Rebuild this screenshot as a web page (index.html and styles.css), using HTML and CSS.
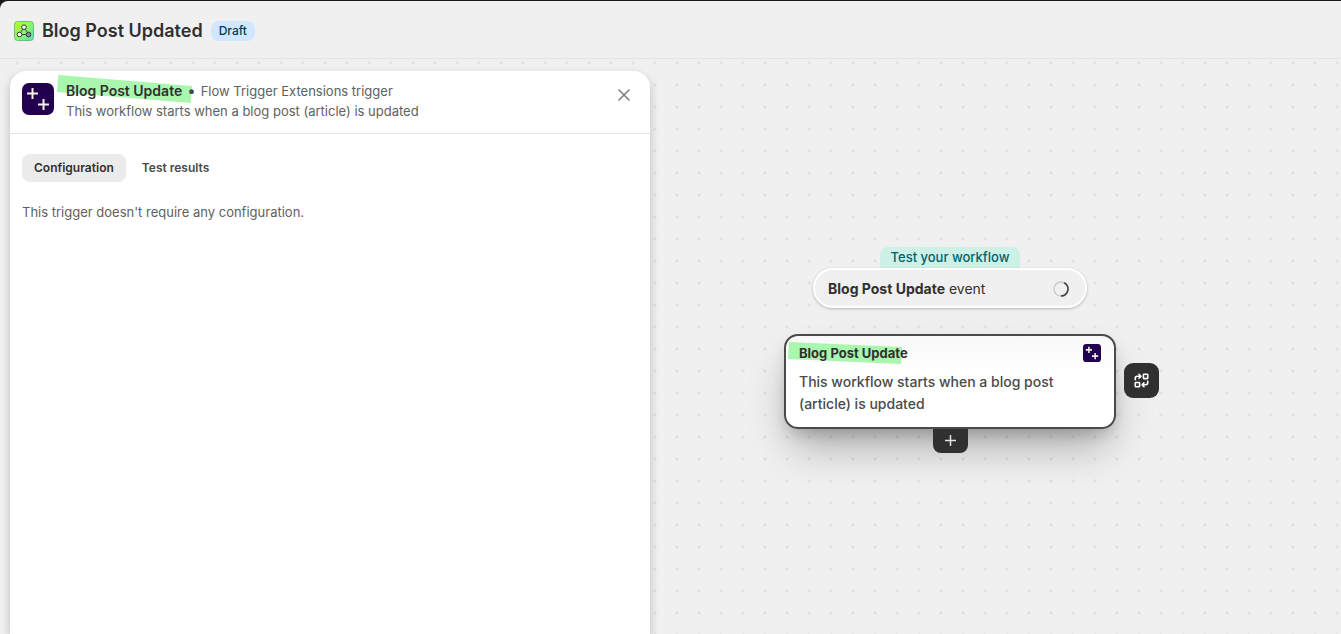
FILE: index.html
```html
<!DOCTYPE html>
<html lang="en">
<head>
    <meta charset="UTF-8">
    <meta name="viewport" content="width=device-width, initial-scale=1.0">
    <title>Blog Post Updated</title>
    <link rel="stylesheet" href="styles.css">
</head>
<body>
    <div class="frame">
        <header class="top-bar">
            <svg class="flow-logo" viewBox="0 0 20 20" aria-hidden="true">
                <defs>
                    <linearGradient id="flow-bg" x1="0" y1="0" x2="1" y2="1">
                        <stop offset="0" stop-color="#b6ff1c"/>
                        <stop offset="0.5" stop-color="#8df768"/>
                        <stop offset="1" stop-color="#56dcc8"/>
                    </linearGradient>
                </defs>
                <rect x="0.5" y="0.5" width="19" height="19" rx="3" fill="url(#flow-bg)" stroke="#58b46c" stroke-opacity="0.8"/>
                <path d="M9 8 6.500 11.500M11 8l2.500 3.500M8 13.500h4" fill="none" stroke="#3a4a3c" stroke-width="1"/>
                <circle cx="10" cy="6.200" r="2.300" fill="#fff" stroke="#333" stroke-width="1"/>
                <circle cx="5.500" cy="13.500" r="2.300" fill="#fff" stroke="#333" stroke-width="1"/>
                <circle cx="14.500" cy="13.500" r="2.300" fill="#909090" stroke="#333" stroke-width="1"/>
            </svg>
            <h1>Blog Post Updated</h1>
            <span class="badge">Draft</span>
        </header>
        <main class="canvas">
            <section class="panel">
                <div class="panel-head">
                    <svg class="app-icon" viewBox="0 0 32 32" aria-hidden="true">
                        <rect width="32" height="32" rx="7" fill="#22004f"/>
                        <path d="M10.500 5v11M5 10.500h11M21.500 16v11M16 21.500h11" stroke="#f3f0e6" stroke-width="2"/>
                    </svg>
                    <div class="panel-title">
                        <p><strong class="marked">Blog Post Update</strong><span class="bullet">•</span><span>Flow Trigger Extensions trigger</span></p>
                        <p>This workflow starts when a blog post (article) is updated</p>
                    </div>
                    <button class="close" type="button" aria-label="Close">
                        <svg viewBox="0 0 12 12"><path d="M1 1l10 10M11 1L1 11" fill="none" stroke="#7a7a7a" stroke-width="1.500" stroke-linecap="round"/></svg>
                    </button>
                </div>
                <div class="panel-body">
                    <div class="tabs">
                        <button class="tab active" type="button">Configuration</button>
                        <button class="tab" type="button">Test results</button>
                    </div>
                    <p>This trigger doesn't require any configuration.</p>
                </div>
            </section>
            <section class="flow">
                <span class="test-label">Test your workflow</span>
                <button class="test-event" type="button">
                    <span><b>Blog Post Update</b> event</span>
                    <svg class="spinner" viewBox="0 0 16 16" aria-hidden="true">
                        <circle cx="8" cy="8" r="7" fill="none" stroke="#c9c9c9" stroke-width="1.300"/>
                        <path d="M11 1.700A7 7 0 0 1 8 15" fill="none" stroke="#444" stroke-width="1.600"/>
                    </svg>
                </button>
                <article class="node">
                    <div class="node-head">
                        <h2 class="marked">Blog Post Update</h2>
                        <svg class="node-icon" viewBox="0 0 32 32" aria-hidden="true">
                            <rect width="32" height="32" rx="6" fill="#22004f"/>
                            <path d="M10.500 5v11M5 10.500h11M21.500 16v11M16 21.500h11" stroke="#f3f0e6" stroke-width="2.800"/>
                        </svg>
                    </div>
                    <p>This workflow starts when a blog post (article) is updated</p>
                    <button class="swap" type="button" aria-label="Replace trigger">
                        <svg viewBox="0 0 14 14" fill="none" stroke="#fff" stroke-width="1.500" stroke-linecap="round" stroke-linejoin="round">
                            <rect x="8.800" y="1.200" width="4" height="4" rx="0.500"/>
                            <rect x="1.200" y="8.800" width="4" height="4" rx="0.500"/>
                            <path d="M1.200 6.300V4.800Q1.200 3 3 3H6M4.700 1.200 6.500 3 4.700 4.800M12.800 7.700v1.500Q12.800 11 11 11H8M9.300 9.200 7.500 11l1.800 1.800"/>
                        </svg>
                    </button>
                </article>
                <button class="add" type="button" aria-label="Add step">
                    <svg viewBox="0 0 11 11"><path d="M5.500 0v11M0 5.500h11" stroke="#e3e3e3" stroke-width="1.500"/></svg>
                </button>
            </section>
        </main>
    </div>
</body>
</html>
```
FILE: styles.css
```css
*{
    margin: 0;
    padding: 0;
    box-sizing: border-box;
}
body{
    background: #1a1a1a;
    font-family: Inter, sans-serif;
    font-size: 13px;
    font-weight: 430;
    line-height: 20px;
    color: #616161;
}
button{
    border: none;
    font: inherit;
    cursor: pointer;
}
svg{
    display: block;
}
.frame{
    height: 100vh;
    display: flex;
    flex-direction: column;
    border-top: 1px solid #1a1a1a;
    overflow: hidden;
}
.top-bar{
    height: 58px;
    flex: none;
    display: flex;
    align-items: center;
    gap: 8px;
    padding: 2px 14px 0;
    background: #f0f0f0;
    border-bottom: 1px solid #e3e3e3;
    border-top-left-radius: 8px;
}
.flow-logo{
    width: 20px;
    height: 20px;
}
h1{
    font-size: 18px;
    font-weight: 600;
    line-height: 24px;
    color: #303030;
}
.badge{
    padding: 0 8px;
    border-radius: 8px;
    background: #d1e7ff;
    color: #003a5a;
    font-size: 12px;
    font-weight: 550;
}
.canvas{
    flex: 1;
    min-height: 0;
    display: flex;
    background-color: #f0f0f0;
    background-image: radial-gradient(circle, #e0e0e0 1px, transparent 2px);
    background-size: 22px 22px;
    background-position: 6px 15px;
}
.panel{
    width: 640px;
    flex: none;
    margin: 12px 0 0 10px;
    background: #fff;
    border-radius: 16px 16px 0 0;
    box-shadow: 0 4px 10px rgba(0,0,0,0.22);
}
.panel-head{
    display: flex;
    gap: 12px;
    padding: 10px 16px 12px 12px;
    border-bottom: 1px solid #e3e3e3;
}
.app-icon{
    width: 32px;
    height: 32px;
    margin-top: 2px;
}
.panel-title{
    flex: 1;
}
.panel-title strong{
    color: #303030;
    font-size: 14px;
    font-weight: 600;
}
.bullet{
    margin: 0 5px;
    color: #4a4a4a;
    font-size: 15px;
    line-height: 1;
}
/* marker stroke behind the trigger name */
.marked{
    position: relative;
    z-index: 0;
}
.marked::before{
    content: "";
    position: absolute;
    z-index: -1;
    background: #a9f7ae;
}
.panel-title .marked::before{
    top: -7px;
    left: -9px;
    width: 135px;
    height: 28px;
    clip-path: polygon(1% 0, 100% 39%, 99% 100%, 0 61%);
}
/* the bullet stays above the marker */
.bullet{
    position: relative;
}
.node .marked::before{
    top: -1px;
    left: -11px;
    width: 114px;
    height: 22px;
    clip-path: polygon(1% 0, 100% 23%, 99% 100%, 0 77%);
}
.close{
    width: 20px;
    height: 20px;
    margin-top: 4px;
    padding: 4px;
    background: none;
}
.panel-body{
    padding: 20px 12px;
}
.tabs{
    display: flex;
    gap: 4px;
    margin-bottom: 20px;
}
.tab{
    padding: 4px 12px;
    border-radius: 8px;
    background: none;
    color: #4a4a4a;
    font-size: 12px;
    font-weight: 570;
}
.tab.active{
    background: #ebebeb;
    color: #303030;
}
.flow{
    width: 332px;
    flex: none;
    display: flex;
    flex-direction: column;
    align-items: center;
    margin-left: 134px;
    padding-top: 188px;
}
.test-label{
    padding: 0 11px 1px;
    border-radius: 8px 8px 0 0;
    background: #cdf0e7;
    color: #00626f;
    font-weight: 550;
}
.test-event{
    width: 274px;
    height: 40px;
    display: flex;
    align-items: center;
    justify-content: space-between;
    margin-bottom: 26px;
    padding: 1px 16px 0 13px;
    border: 2px solid #fff;
    border-radius: 20px;
    background: #f0f0f0;
    box-shadow: 0 1px 3px rgba(0,0,0,0.25);
    color: #303030;
    font-size: 14px;
}
.test-event b{
    font-weight: 700;
}
.spinner{
    width: 16px;
    height: 16px;
}
.node{
    position: relative;
    width: 100%;
    padding: 7px 13px 12px;
    border: 2px solid #4a4a4a;
    border-radius: 14px;
    background: linear-gradient(#f8f8f8, #fff 36px);
    box-shadow: 0 24px 44px -8px rgba(0,0,0,0.3), 0 8px 16px -4px rgba(0,0,0,0.2);
}
.node-head{
    display: flex;
    align-items: center;
    justify-content: space-between;
    margin-bottom: 8px;
}
h2{
    color: #303030;
    font-size: 13px;
    font-weight: 650;
}
.node-icon{
    width: 18px;
    height: 18px;
}
.node p{
    padding-right: 40px;
    color: #4a4a4a;
    font-size: 14px;
    font-weight: 500;
    line-height: 22px;
}
.swap{
    position: absolute;
    top: 27px;
    left: calc(100% + 10px);
    width: 35px;
    height: 35px;
    padding: 10px;
    border-radius: 9px;
    background: #303030;
}
.add{
    position: relative;
    width: 35px;
    padding: 6px 12px 7px;
    border-radius: 0 0 8px 8px;
    background: #303030;
}
```
